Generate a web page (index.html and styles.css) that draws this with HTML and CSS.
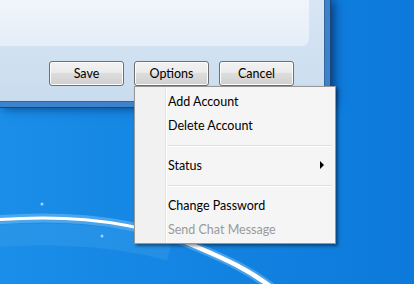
FILE: index.html
```html
<!DOCTYPE html>
<html>
<head>
    <meta charset="utf-8">
    <title>Account options</title>
    <link rel="stylesheet" href="styles.css">
</head>
<body>
    <div class="desktop">
        <svg class="wallpaper" width="414" height="284" viewBox="0 0 414 284">
            <defs>
                <linearGradient id="sky" x1="0" y1="0" x2="1" y2="0">
                    <stop offset="0" stop-color="#1a8ee8"/>
                    <stop offset="1" stop-color="#0c79db"/>
                </linearGradient>
            </defs>
            <rect width="414" height="284" fill="url(#sky)"/>
            <path d="M-5 236 C 60 232, 120 236, 170 250" fill="none" stroke="#5fb4f2" stroke-width="22" opacity="0.2"/>
            <path d="M-5 220 C 70 214, 140 222, 197 247 C 225 259, 250 270, 275 290" fill="none" stroke="#bfe4ff" stroke-width="9" opacity="0.3"/>
            <path d="M-5 220 C 70 214, 140 222, 197 247" fill="none" stroke="#ffffff" stroke-width="3"/>
            <path d="M150 229 C 170 236, 185 241, 197 247 C 225 259, 250 270, 275 290" fill="none" stroke="#ffffff" stroke-width="4.5"/>
            <circle cx="42" cy="204" r="1.5" fill="#9fd3ff"/>
            <circle cx="102" cy="236" r="1.5" fill="#9fd3ff"/>
        </svg>

        <div class="frame">
            <div class="frame-inner">
                <div class="client">
                    <div class="panel"></div>
                    <div class="buttons">
                        <button class="btn">Save</button>
                        <button class="btn">Options</button>
                        <button class="btn">Cancel</button>
                    </div>
                </div>
            </div>
        </div>

        <div class="menu">
            <div class="menu-item">Add Account</div>
            <div class="menu-item">Delete Account</div>
            <div class="menu-sep"></div>
            <div class="menu-item">Status <span class="arrow"></span></div>
            <div class="menu-sep"></div>
            <div class="menu-item">Change Password</div>
            <div class="menu-item disabled">Send Chat Message</div>
        </div>
    </div>
</body>
</html>
```

FILE: styles.css
```css
* {
    font-family: Lato, "Noto Sans", sans-serif;
    font-size: 12.5px;
    box-sizing: border-box;
}
body {
    margin: 0;
}
.desktop {
    position: relative;
    width: 414px;
    height: 284px;
    overflow: hidden;
}
.wallpaper {
    position: absolute;
    left: 0;
    top: 0;
}
.frame {
    position: relative;
    width: 331px;
    border-right: 1px solid #1b4778;
    border-bottom: 1px solid #1b4778;
    box-shadow: 3px 0 10px rgba(0, 25, 70, 0.7);
}
.frame-inner {
    border-right: 5px solid #3d82cb;
    border-bottom: 5px solid #3d82cb;
}
.client {
    height: 102px;
    border-right: 1px solid #33689f;
    border-bottom: 1px solid #33689f;
    background: linear-gradient(#d8e6f4, #c9dcef);
}
.panel {
    width: 309px;
    height: 46px;
    border-bottom-right-radius: 7px;
    background: linear-gradient(#f1f5fb, #e4edf8);
}
.buttons {
    display: flex;
    gap: 10px;
    margin-top: 15px;
    padding-left: 49px;
}
.btn {
    width: 75px;
    height: 25px;
    padding: 0;
    border: 1px solid #707070;
    border-radius: 3px;
    background: linear-gradient(#f2f2f2 0%, #ebebeb 45%, #dddddd 50%, #cfcfcf 100%);
    box-shadow: inset 0 0 0 1px #fcfcfc;
    color: #000;
}
.menu {
    position: absolute;
    left: 134px;
    top: 86px;
    width: 202px;
    padding: 2px 3px 2px 2px;
    border: 1px solid #979797;
    background: linear-gradient(to right, #f1f1f1 0 30px, #e2e3e3 30px 31px, #ffffff 31px 32px, #f5f5f5 32px);
    box-shadow: 2px 2px 3px rgba(0, 0, 0, 0.45);
}
.menu-item {
    display: flex;
    align-items: center;
    justify-content: space-between;
    height: 24px;
    padding: 0 8px 0 31px;
    color: #000;
}
.menu-item.disabled {
    color: #9a9a9a;
}
.menu-sep {
    height: 16px;
    margin-left: 31px;
    padding-top: 8px;
}
.menu-sep::before {
    content: "";
    display: block;
    border-top: 1px solid #e0e0e0;
    border-bottom: 1px solid #ffffff;
}
.arrow {
    width: 0;
    height: 0;
    border-left: 4px solid #000;
    border-top: 4px solid transparent;
    border-bottom: 4px solid transparent;
}
```
